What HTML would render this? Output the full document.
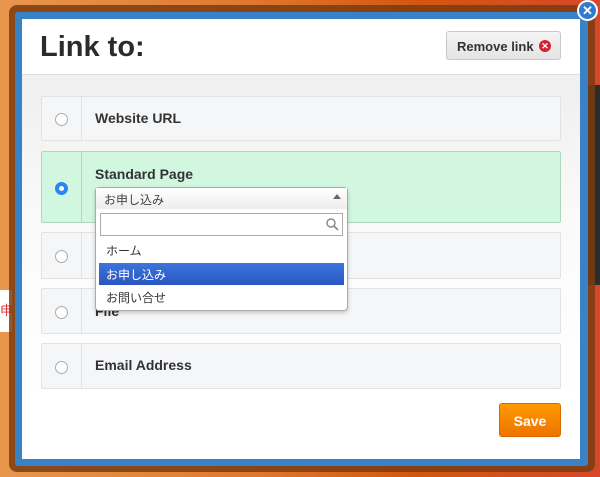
<!DOCTYPE html>
<html><head><meta charset="utf-8"><style>
*{box-sizing:border-box;margin:0;padding:0}
body{width:600px;height:477px;overflow:hidden;position:relative;font-family:"Liberation Sans","Noto Sans CJK JP",sans-serif;background:linear-gradient(90deg,#e8964c 0%,#e07a30 40%,#d4560e 70%,#d6482a 100%)}
.abs{position:absolute}
.frame{left:9px;top:5px;width:586px;height:467px;background:#7a3c12;border-radius:8px;opacity:.85}
.blue{left:15px;top:12px;width:573px;height:454px;background:#3a82c8;border-radius:3px}
.white{left:22px;top:19px;width:558px;height:440px;background:linear-gradient(#f0f0f0 75px,#fafafa 200px,#fff 380px)}
.head{left:22px;top:19px;width:558px;height:56px;background:#fff;border-bottom:1px solid #ddd}
h1{position:absolute;left:40px;top:31px;font-size:29px;font-weight:bold;color:#2b2b2b}
.rm{left:446px;top:31px;width:115px;height:29px;border:1px solid #c8c8c8;border-radius:3px;background:linear-gradient(#f4f4f4,#e4e4e4);font-size:13px;font-weight:bold;color:#333;padding:7px 0 0 10px}
.rm i{position:absolute;right:9px;top:8px;width:12px;height:12px;border-radius:50%;background:#d72030;color:#fff;font-size:9px;font-style:normal;text-align:center;line-height:12px}
.row{left:41px;width:520px;border:1px solid #e2e2e2;border-radius:2px;background:#f5f6f8}
.row .div{position:absolute;left:39px;top:0;bottom:0;border-left:1px solid #e2e2e2}
.row .r{position:absolute;left:13px;width:13px;height:13px;border-radius:50%;border:1px solid #aaa;background:#fff}
.row b{position:absolute;left:53px;font-size:14px;color:#333}
.sel{background:#d2f7e0;border-color:#aed8bc}
.close{left:577px;top:0px;width:21px;height:21px;border-radius:50%;background:#2e7bd0;border:2px solid #fff;color:#fff;font-weight:bold;font-size:13px;text-align:center;line-height:17px}
.save{left:499px;top:403px;width:62px;height:34px;border-radius:3px;background:linear-gradient(#ff9900,#ee7300);color:#fff;font-weight:bold;font-size:14px;text-align:center;line-height:34px;border:1px solid #d86a00}
</style></head><body>
<div class="abs" style="left:0;top:290px;width:12px;height:42px;background:#fff;color:#d33;font-size:13px;line-height:42px">申</div>
<div class="abs" style="left:583px;top:85px;width:17px;height:200px;background:#2c2c2c"></div>
<div class="abs frame"></div>
<div class="abs blue"></div>
<div class="abs white"></div>
<div class="abs head"></div>
<h1>Link to:</h1>
<div class="abs rm">Remove link<i>✕</i></div>
<div class="abs row" style="top:96px;height:45px"><div class="div"></div><div class="r" style="top:16px"></div><b style="top:13px">Website URL</b></div>
<div class="abs row sel" style="top:151px;height:72px"><div class="div" style="border-color:#aed8bc"></div><div class="r" style="top:30px;border:4px solid #2a86f0"></div><b style="top:14px">Standard Page</b></div>
<div class="abs row" style="top:232px;height:47px"><div class="div"></div><div class="r" style="top:17px"></div></div>
<div class="abs row" style="top:288px;height:46px"><div class="div"></div><div class="r" style="top:17px"></div><b style="top:14px">File</b></div>
<div class="abs row" style="top:343px;height:46px"><div class="div"></div><div class="r" style="top:17px"></div><b style="top:13px">Email Address</b></div>
<div class="abs" style="left:95px;top:187px;width:253px;height:124px;background:#fff;border:1px solid #aaa;border-radius:4px;box-shadow:0 2px 4px rgba(0,0,0,.2)">
<div style="height:21px;background:linear-gradient(#fff,#eee);border-bottom:1px solid #eee;font-size:12px;color:#444;padding:3px 0 0 8px;position:relative">お申し込み<span style="position:absolute;right:6px;top:6px;border:4px solid transparent;border-bottom:5px solid #666;border-top:0"></span></div>
<div style="margin:4px 4px 0;height:23px;border:1px solid #aaa;position:relative"><svg style="position:absolute;right:3px;top:4px" width="13" height="13"><circle cx="5" cy="5" r="4" fill="none" stroke="#888" stroke-width="1.4"/><line x1="8" y1="8" x2="12" y2="12" stroke="#888" stroke-width="1.6"/></svg></div>
<div style="font-size:12px;color:#333;padding:6px 0 0 10px;height:27px">ホーム</div>
<div style="margin:0 3px;height:22px;background:linear-gradient(#3c75db,#2a56c2);color:#fff;font-size:12px;padding:3px 0 0 7px">お申し込み</div>
<div style="font-size:12px;color:#333;padding:4px 0 0 10px">お問い合せ</div>
</div>
<div class="abs save">Save</div>
<div class="abs close">✕</div>
</body></html>
